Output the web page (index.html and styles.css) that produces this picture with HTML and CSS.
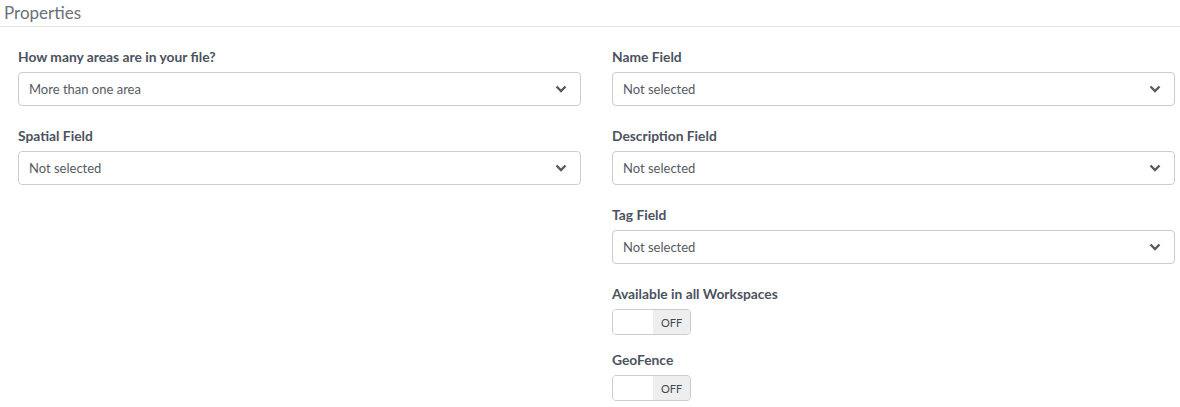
FILE: index.html
```html
<!DOCTYPE html>
<html>
<head>
<meta charset="utf-8">
<link rel="stylesheet" href="styles.css">
</head>
<body>
<div class="panel">
  <h2 class="title">Properties</h2>
  <div class="grid">
    <div class="col">
      <div class="field">
        <label class="lbl">How many areas are in your file?</label>
        <div class="select"><span>More than one area</span><svg class="chev" viewBox="0 0 12 8" width="12" height="8"><path d="M1.5 1.5 L6 6 L10.5 1.5" fill="none" stroke="#555a60" stroke-width="2.4"/></svg></div>
      </div>
      <div class="field">
        <label class="lbl">Spatial Field</label>
        <div class="select"><span>Not selected</span><svg class="chev" viewBox="0 0 12 8" width="12" height="8"><path d="M1.5 1.5 L6 6 L10.5 1.5" fill="none" stroke="#555a60" stroke-width="2.4"/></svg></div>
      </div>
    </div>
    <div class="col">
      <div class="field">
        <label class="lbl">Name Field</label>
        <div class="select"><span>Not selected</span><svg class="chev" viewBox="0 0 12 8" width="12" height="8"><path d="M1.5 1.5 L6 6 L10.5 1.5" fill="none" stroke="#555a60" stroke-width="2.4"/></svg></div>
      </div>
      <div class="field">
        <label class="lbl">Description Field</label>
        <div class="select"><span>Not selected</span><svg class="chev" viewBox="0 0 12 8" width="12" height="8"><path d="M1.5 1.5 L6 6 L10.5 1.5" fill="none" stroke="#555a60" stroke-width="2.4"/></svg></div>
      </div>
      <div class="field">
        <label class="lbl">Tag Field</label>
        <div class="select"><span>Not selected</span><svg class="chev" viewBox="0 0 12 8" width="12" height="8"><path d="M1.5 1.5 L6 6 L10.5 1.5" fill="none" stroke="#555a60" stroke-width="2.4"/></svg></div>
      </div>
      <div class="field small">
        <label class="lbl">Available in all Workspaces</label>
        <div class="toggle"><span class="knob"></span><span class="off">OFF</span></div>
      </div>
      <div class="field small">
        <label class="lbl">GeoFence</label>
        <div class="toggle"><span class="knob"></span><span class="off">OFF</span></div>
      </div>
    </div>
  </div>
</div>
</body>
</html>
```
FILE: styles.css
```css
html, body {
  margin: 0;
  padding: 0;
  background: #fff;
}
body {
  font-family: Lato, "Open Sans", sans-serif;
  color: #4a5260;
}
.panel {
  width: 1180px;
}
.title {
  margin: 0;
  padding: 2px 0 0 4px;
  height: 24px;
  font-size: 17px;
  font-weight: 400;
  line-height: 22px;
  color: #6a7078;
  border-bottom: 1px solid #e3e3e3;
}
.grid {
  display: grid;
  grid-template-columns: 563px 563px;
  column-gap: 31px;
  padding: 22px 0 0 18px;
}
.col {
  display: flex;
  flex-direction: column;
}
.field {
  height: 79px;
}
.field.small {
  height: 66px;
}
.lbl {
  display: block;
  font-size: 13.8px;
  font-weight: 700;
  line-height: 16px;
  height: 16px;
  margin-bottom: 7px;
  color: #4b5260;
}
.select {
  box-sizing: border-box;
  height: 34px;
  border: 1px solid #cccccc;
  border-radius: 4px;
  display: flex;
  align-items: center;
  justify-content: space-between;
  padding: 0 13px 1px 10px;
  font-size: 13px;
  color: #555b63;
}
.toggle {
  box-sizing: border-box;
  width: 79px;
  height: 26px;
  border: 1px solid #cccccc;
  border-radius: 4px;
  display: flex;
  overflow: hidden;
}
.knob {
  width: 40px;
  background: #fff;
}
.off {
  flex: 1;
  background: #eeeeee;
  font-size: 11px;
  display: flex;
  align-items: center;
  justify-content: center;
  color: #444a52;
}
```
